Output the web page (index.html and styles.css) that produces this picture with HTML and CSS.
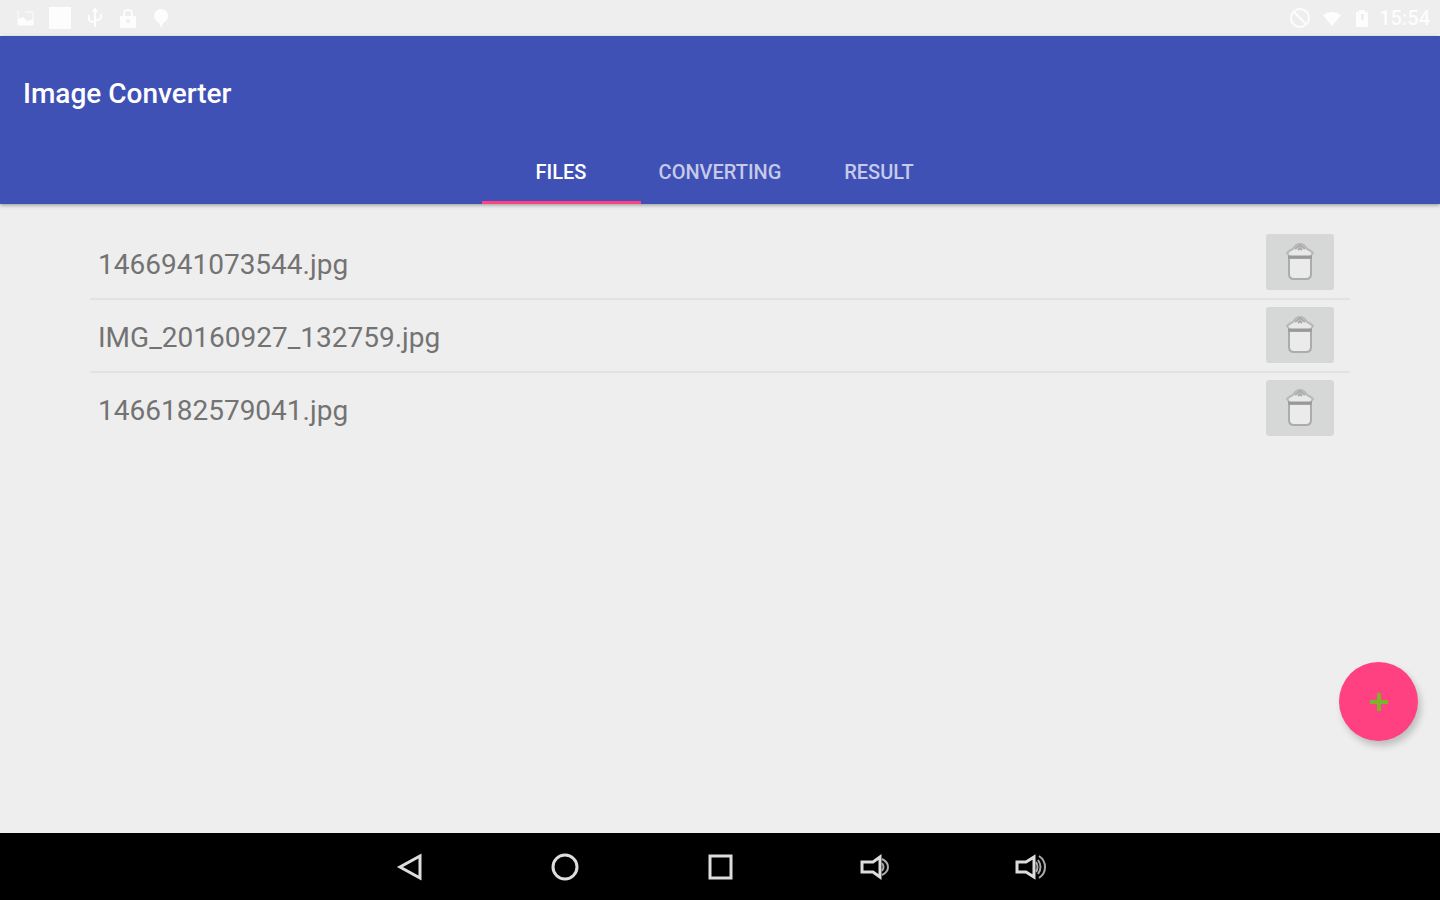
FILE: index.html
```
<!DOCTYPE html>
<html lang="en">
<head>
    <meta charset="UTF-8">
    <meta name="viewport" content="width=device-width, initial-scale=1.0">
    <title>Image Converter</title>
    <link rel="stylesheet" href="styles.css">
</head>
<body>
    <svg class="symbols" aria-hidden="true">
        <symbol id="trash" viewBox="0 0 32 40">
            <path d="M5 16h22v16q0 5-5 5H10q-5 0-5-5z" fill="#ebebeb" stroke="#acacac" stroke-width="2"/>
            <path d="M3 11q3-3 6-4 3-5 7-5t7 5q3 1 6 4l-3 4H6z" fill="#e8e8e8" stroke="#b8b8b8" stroke-width="2" stroke-linejoin="round"/>
            <path d="M11 7l5-4 5 4M14 8l2-2 2 2" fill="none" stroke="#aaa" stroke-width="2"/>
            <path d="M4 15h24" stroke="#999" stroke-width="3"/>
        </symbol>
    </svg>
    <div class="status-bar">
        <div class="status-group status-left">
            <svg width="18" height="20" viewBox="0 0 18 20"><path d="M1 2v15h15V4H8" fill="none" stroke="currentColor" stroke-width="1"/><path d="M1 17v-6l5-2 4 4 6-2v6z" fill="currentColor"/></svg>
            <svg width="24" height="24" viewBox="0 0 24 24"><rect x="0" y="1" width="22" height="22" fill="currentColor"/></svg>
            <svg width="18" height="20" viewBox="0 0 18 20"><path d="M8 2v17M2 7v4q0 3 6 3M14 6v3q0 3-6 3M6 4l2-3 2 3" fill="none" stroke="currentColor" stroke-width="2"/></svg>
            <svg width="18" height="20" viewBox="0 0 18 20"><path d="M5 9V5q0-3 4-3t4 3v4" fill="none" stroke="currentColor" stroke-width="2"/><path d="M1 8h16v12H1zM9 11a2 2 0 1 0 .1 0z" fill="currentColor" fill-rule="evenodd"/></svg>
            <svg width="18" height="20" viewBox="0 0 18 20"><circle cx="10" cy="8" r="7" fill="currentColor"/><path d="M7 13h6l-3 7z" fill="currentColor"/></svg>
        </div>
        <div class="status-group status-right">
            <svg width="22" height="22" viewBox="0 0 22 22"><circle cx="11" cy="11" r="9" fill="none" stroke="currentColor" stroke-width="2"/><path d="M5 5l12 12" stroke="currentColor" stroke-width="2"/></svg>
            <svg width="18" height="20" viewBox="0 0 18 20"><path d="M0 7q9-6 18 0L9 18z" fill="currentColor"/></svg>
            <svg width="18" height="20" viewBox="0 0 18 20"><path d="M3 4h3V2h6v2h3v15H3zM8 6v6h3V6z" fill="currentColor" fill-rule="evenodd"/></svg>
            <span class="clock">15:54</span>
        </div>
    </div>
    <header class="header">
        <h1>Image Converter</h1>
        <nav class="tabs">
            <button class="tab active">FILES</button>
            <button class="tab">CONVERTING</button>
            <button class="tab">RESULT</button>
        </nav>
    </header>
    <main class="content">
        <ul class="files">
            <li class="file">
                <span class="name">1466941073544.jpg</span>
                <button class="delete" aria-label="Delete 1466941073544.jpg"><svg width="32" height="40"><use href="#trash"/></svg></button>
            </li>
            <li class="file">
                <span class="name">IMG_20160927_132759.jpg</span>
                <button class="delete" aria-label="Delete IMG_20160927_132759.jpg"><svg width="32" height="40"><use href="#trash"/></svg></button>
            </li>
            <li class="file">
                <span class="name">1466182579041.jpg</span>
                <button class="delete" aria-label="Delete 1466182579041.jpg"><svg width="32" height="40"><use href="#trash"/></svg></button>
            </li>
        </ul>
        <button class="add" aria-label="Add file">
            <svg width="20" height="20" viewBox="0 0 20 20"><path d="M10 1v18M1 10h18" stroke="#7db32a" stroke-width="4"/></svg>
        </button>
    </main>
    <div class="nav-bar">
        <button class="nav-button" aria-label="Back">
            <svg width="32" height="32" viewBox="0 0 32 32"><path d="M26 5v22L6 16z"/></svg>
        </button>
        <button class="nav-button" aria-label="Home">
            <svg width="32" height="32" viewBox="0 0 32 32"><circle cx="16" cy="16" r="12"/></svg>
        </button>
        <button class="nav-button" aria-label="Recent apps">
            <svg width="32" height="32" viewBox="0 0 32 32"><rect x="6" y="5" width="21" height="22"/></svg>
        </button>
        <button class="nav-button" aria-label="Volume down">
            <svg width="32" height="32" viewBox="0 0 32 32"><path d="M3 11h11l7-5v20l-7-5H3z"/><path class="wave" d="M23 8q6 3 6 8t-6 8M23 12q3 4 0 8"/></svg>
        </button>
        <button class="nav-button" aria-label="Volume up">
            <svg width="32" height="32" viewBox="0 0 32 32"><path d="M3 11h9l8-5v20l-8-5H3z"/><path class="wave" d="M22 11q3 5 0 10M25 5q6 4 6 11t-6 11M24 9q5 7 0 14"/></svg>
        </button>
    </div>
</body>
</html>
```
FILE: styles.css
```
* {
    box-sizing: border-box;
}
body {
    margin: 0;
    min-height: 100vh;
    display: flex;
    flex-direction: column;
    font-family: Roboto, sans-serif;
    background-color: #eee;
    color: #737373;
}
button {
    border: none;
    padding: 0;
    font-family: inherit;
    cursor: pointer;
}
svg {
    display: block;
}
.symbols {
    position: absolute;
    width: 0;
    height: 0;
}
.status-bar {
    height: 36px;
    display: flex;
    justify-content: space-between;
    align-items: center;
    padding: 2px 10px 0 17px;
    border-bottom: 2px solid #f8f8f8;
    color: #fdfdfd;
}
.status-group {
    display: flex;
    align-items: center;
}
.status-left {
    gap: 14px;
}
.status-right {
    gap: 12px;
}
.clock {
    margin-left: -4px;
    font-size: 20px;
    font-weight: 500;
}
.header {
    position: relative;
    background-color: #3f51b5;
    color: #fff;
    box-shadow: 0 1px 4px rgba(0,0,0,0.4);
}
h1 {
    margin: 0;
    padding: 38px 23px 26px;
    font-size: 28px;
    line-height: 40px;
    font-weight: 500;
}
.tabs {
    display: flex;
    justify-content: center;
}
.tab {
    width: 159px;
    height: 64px;
    border-top: 3px solid transparent;
    border-bottom: 3px solid transparent;
    background: none;
    color: #c5cae9;
    font-size: 20px;
    font-weight: 500;
}
.tab.active {
    color: #fff;
    border-bottom-color: #ff4081;
}
.content {
    position: relative;
    flex: 1;
    padding: 23px 90px;
}
.files {
    list-style: none;
    margin: 0;
    padding: 0;
}
.file {
    display: flex;
    justify-content: space-between;
    align-items: center;
    padding: 7px 16px 8px 8px;
    border-bottom: 2px solid #e2e2e2;
    font-size: 28px;
}
.file:last-child {
    border-bottom: none;
}
.name {
    padding-top: 4px;
}
.delete {
    width: 68px;
    height: 56px;
    display: flex;
    justify-content: center;
    align-items: center;
    border-radius: 3px;
    background-color: #d6d7d7;
}
.add {
    position: absolute;
    right: 22px;
    bottom: 92px;
    width: 79px;
    height: 79px;
    display: flex;
    justify-content: center;
    align-items: center;
    border-radius: 50%;
    background-color: #ff4081;
    box-shadow: 3px 5px 7px rgba(0,0,0,0.2);
}
.nav-bar {
    height: 67px;
    display: flex;
    justify-content: center;
    background-color: #000;
}
.nav-button {
    width: 155px;
    display: flex;
    justify-content: center;
    align-items: center;
    background: none;
}
.nav-button svg {
    fill: none;
    stroke: #ddd;
    stroke-width: 3px;
}
.nav-button .wave {
    stroke: #aaa;
    stroke-width: 2px;
}
```
